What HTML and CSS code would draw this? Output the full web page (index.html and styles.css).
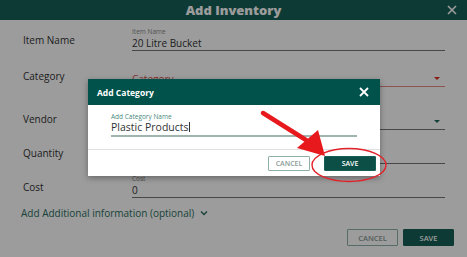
FILE: index.html
```html
<!DOCTYPE html>
<html lang="en">
<head>
    <meta charset="UTF-8">
    <meta name="viewport" content="width=device-width, initial-scale=1.0">
    <title>Add Inventory</title>
    <link rel="stylesheet" href="styles.css">
</head>
<body>
    <div class="page">
        <div class="topbar">
            <h1>Add Inventory</h1>
            <span class="close">
                <svg width="10" height="10" viewBox="0 0 10 10"><path d="M1 1L9 9M9 1L1 9" stroke="#fff" stroke-width="1.6"/></svg>
            </span>
        </div>

        <div class="form">
            <div class="row first">
                <div class="label">Item Name</div>
                <div class="field">
                    <div class="hint">Item Name</div>
                    <div class="value">20 Litre Bucket</div>
                </div>
            </div>
            <div class="row">
                <div class="label">Category</div>
                <div class="field select error">
                    <div class="value">Category</div>
                    <span class="caret"></span>
                </div>
            </div>
            <div class="row tall">
                <div class="label">Vendor</div>
                <div class="field select">
                    <div class="value">&nbsp;</div>
                    <span class="caret"></span>
                </div>
            </div>
            <div class="row short">
                <div class="label">Quantity</div>
                <div class="field">
                    <div class="value">&nbsp;</div>
                </div>
            </div>
            <div class="row short">
                <div class="label">Cost</div>
                <div class="field">
                    <div class="hint">Cost</div>
                    <div class="value">0</div>
                </div>
            </div>

            <div class="more">
                Add Additional information (optional)
                <svg width="8" height="6" viewBox="0 0 8 6"><path d="M1 1.5L4 4.5L7 1.5" fill="none" stroke="#2a6e60" stroke-width="1.4"/></svg>
            </div>

            <div class="actions">
                <button class="btn outline">CANCEL</button>
                <button class="btn primary">SAVE</button>
            </div>
        </div>

        <div class="overlay"></div>

        <div class="dialog">
            <div class="dialog-head">
                <span>Add Category</span>
                <svg width="10" height="10" viewBox="0 0 10 10"><path d="M1 1L9 9M9 1L1 9" stroke="#fff" stroke-width="1.8"/></svg>
            </div>
            <div class="dialog-body">
                <div class="hint teal">Add Category Name</div>
                <div class="dialog-input">Plastic Products<span class="cursor"></span></div>
            </div>
            <div class="dialog-foot">
                <button class="btn outline small">CANCEL</button>
                <button class="btn primary small">SAVE</button>
            </div>
        </div>

        <svg class="marks" width="467" height="257" viewBox="0 0 467 257">
            <path d="M263 113L306 140" stroke="#e8191c" stroke-width="4.5" stroke-linecap="round"/>
            <polygon points="297,148 318,130 325,156" fill="#e8191c"/>
            <ellipse cx="349" cy="165" rx="37" ry="16.5" fill="none" stroke="#e3232a" stroke-width="1.4"/>
        </svg>
    </div>
</body>
</html>
```

FILE: styles.css
```css
body {
    margin: 0;
    font-family: 'Open Sans', 'Liberation Sans', sans-serif;
    background: #fff;
}
.page {
    position: relative;
    width: 467px;
    height: 257px;
    overflow: hidden;
    background: #fff;
}
.topbar {
    position: relative;
    height: 20px;
    background: #165f56;
    display: flex;
    align-items: center;
    justify-content: center;
}
.topbar h1 {
    margin: 0;
    color: #fff;
    font-size: 13px;
    font-weight: 800;
}
.topbar .close {
    position: absolute;
    right: 10px;
    top: 5px;
    line-height: 0;
}
.form {
    padding: 8px 22px 0 23px;
}
.row {
    display: grid;
    grid-template-columns: 109px 1fr;
    align-items: end;
    height: 36px;
}
.row.first {
    height: 23px;
}
.row.tall {
    height: 43px;
}
.row.short {
    height: 34px;
}
.label {
    color: #333;
    font-size: 10px;
    line-height: 13px;
    padding-bottom: 4px;
}
.field {
    position: relative;
    border-bottom: 1px solid #777;
}
.field.error {
    border-bottom-color: #e58a80;
}
.hint {
    font-size: 6.5px;
    line-height: 8px;
    color: #888;
}
.hint.teal {
    color: #4b8a7c;
}
.value {
    font-size: 10px;
    line-height: 14px;
    color: #333;
}
.error .value {
    color: #d9534f;
}
.caret {
    position: absolute;
    right: 5px;
    bottom: 6px;
    border-left: 3px solid transparent;
    border-right: 3px solid transparent;
    border-top: 3px solid #1f6b5d;
}
.error .caret {
    border-top-color: #e0301e;
}
.more {
    margin-top: 8px;
    margin-left: -2px;
    font-size: 10px;
    color: #2a6e60;
    display: flex;
    align-items: center;
    gap: 6px;
}
.actions {
    display: flex;
    justify-content: flex-end;
    gap: 5px;
    margin-top: 9px;
    margin-right: -9px;
}
.btn {
    font-family: inherit;
    font-size: 7.5px;
    font-weight: 600;
    width: 51px;
    height: 17px;
    padding: 0;
    border-radius: 1px;
    cursor: pointer;
}
.btn.outline {
    background: #fff;
    border: 1px solid #8fb0a8;
    color: #8a9a96;
}
.btn.primary {
    background: #165f56;
    border: 1px solid #165f56;
    color: #fff;
}
.overlay {
    position: absolute;
    inset: 0;
    background: rgba(0, 0, 0, 0.39);
}
.dialog {
    position: absolute;
    left: 88px;
    top: 79px;
    width: 292px;
    height: 97px;
    background: #fff;
    box-shadow: 0 2px 6px rgba(0, 0, 0, 0.35);
    display: flex;
    flex-direction: column;
}
.dialog-head {
    height: 26px;
    background: #00524a;
    color: #fff;
    font-size: 8.5px;
    font-weight: 700;
    display: flex;
    align-items: center;
    justify-content: space-between;
    padding: 0 11px 0 9px;
}
.dialog-head svg {
    display: block;
}
.dialog-body {
    height: 45px;
    padding: 8px 23px 0 23px;
    border-bottom: 1px solid #e2e2e2;
    box-sizing: border-box;
}
.dialog-input {
    font-size: 10.5px;
    line-height: 13px;
    color: #333;
    padding-bottom: 1px;
    border-bottom: 2px solid #9fb4ae;
}
.cursor {
    display: inline-block;
    width: 1px;
    height: 10px;
    background: #333;
    vertical-align: -1px;
}
.dialog-foot {
    flex: 1;
    display: flex;
    justify-content: flex-end;
    align-items: center;
    gap: 14px;
    padding-right: 4px;
}
.btn.small {
    height: 15px;
    font-size: 7px;
}
.btn.small.outline {
    width: 42px;
}
.btn.small.primary {
    width: 52px;
    background: #0b4f46;
}
.marks {
    position: absolute;
    left: 0;
    top: 0;
}
```
